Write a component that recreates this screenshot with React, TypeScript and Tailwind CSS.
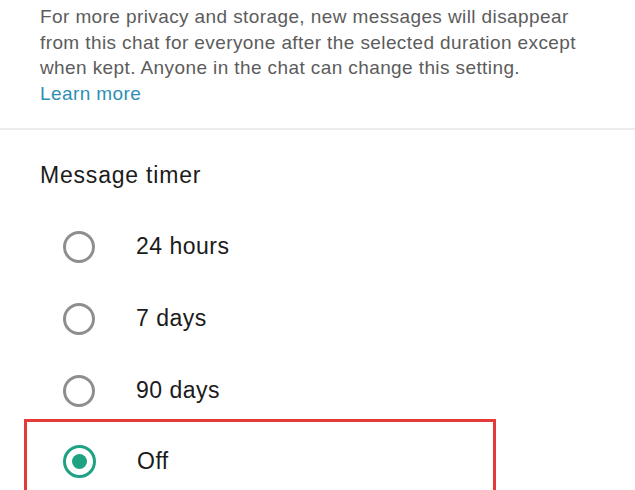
import { useState } from "react";

const options = ["24 hours", "7 days", "90 days", "Off"] as const;

type Option = (typeof options)[number];

function Radio({ checked }: { checked: boolean }) {
  return checked ? (
    <span className="flex h-[33px] w-[33px] shrink-0 items-center justify-center rounded-full border-[3px] border-[#1ea282]">
      <span className="h-[15px] w-[15px] rounded-full bg-[#1ea282]" />
    </span>
  ) : (
    <span className="h-[32px] w-[32px] shrink-0 rounded-full border-[3px] border-[#8e8e8e]" />
  );
}

function Row({ label, checked, onPick }: { label: Option; checked: boolean; onPick: () => void }) {
  return (
    <button type="button" onClick={onPick} className="flex h-[72px] w-full items-center text-left">
      <Radio checked={checked} />
      <span className="ml-[41px] text-[23px] tracking-[0.5px] text-[#1b1b1b]">{label}</span>
    </button>
  );
}

export default function App() {
  const [timer, setTimer] = useState<Option>("Off");

  return (
    <div
      className="h-[490px] w-[635px] overflow-hidden bg-white"
      style={{ fontFamily: '"Liberation Sans", Arial, sans-serif' }}
    >
      <div className="w-[600px] pl-[40px] pt-[4px] pb-[22px] text-[19px] leading-[25.5px] tracking-[0.4px] text-[#5c5c5c]">
        <p>
          For more privacy and storage, new messages will disappear from this chat for everyone after the selected
          duration except when kept. Anyone in the chat can change this setting.
        </p>
        <a className="text-[#2f8fb3]">Learn more</a>
      </div>

      <div className="h-[2px] bg-[#ececec]" />

      <h2 className="px-[40px] pt-[28px] text-[23px] tracking-[0.8px] text-[#1c1c1c]">Message timer</h2>

      <div className="mt-[18px]">
        {options.slice(0, 3).map((o) => (
          <div key={o} className="pl-[63px]">
            <Row label={o} checked={timer === o} onPick={() => setTimer(o)} />
          </div>
        ))}
        <div className="-mt-[8px] ml-[24px] w-[472px] border-[3px] border-b-0 border-[#e53a3a] pl-[36px] pt-[4px]">
          <Row label="Off" checked={timer === "Off"} onPick={() => setTimer("Off")} />
        </div>
      </div>
    </div>
  );
}
